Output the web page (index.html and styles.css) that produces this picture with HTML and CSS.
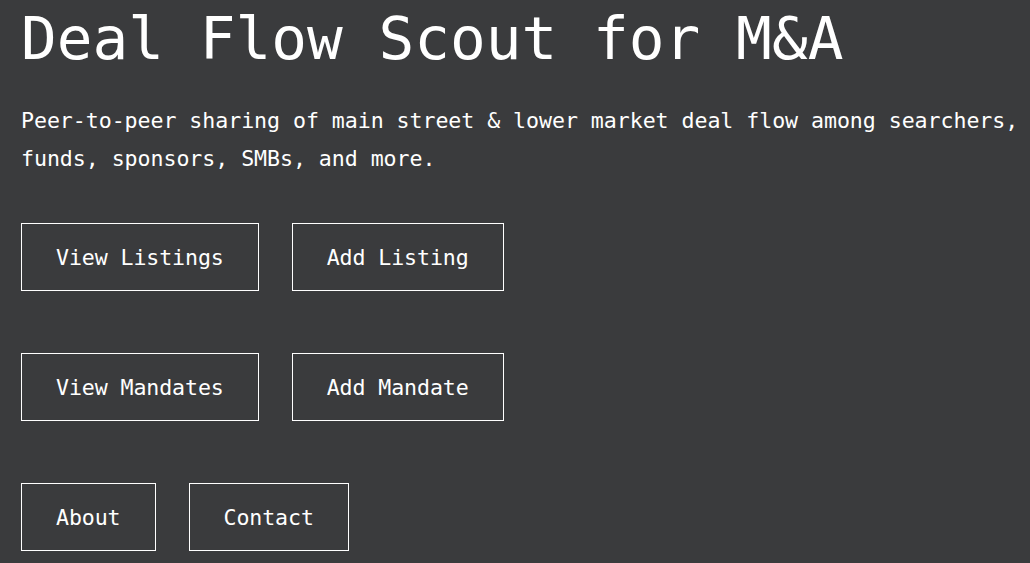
FILE: index.html
```html
<!DOCTYPE html>
<html lang="en">
<head>
  <meta charset="UTF-8">
  <meta name="viewport" content="width=device-width, initial-scale=1.0">
  <title>Deal Flow Scout for M&amp;A</title>
  <link rel="stylesheet" href="styles.css">
</head>
<body>
  <div class="page">
    <h1>Deal Flow Scout for M&amp;A</h1>
    <p class="intro">Peer-to-peer sharing of main street &amp; lower market deal flow among searchers, funds, sponsors, SMBs, and more.</p>

    <div class="actions">
      <a class="btn" href="#">View Listings</a>
      <a class="btn" href="#">Add Listing</a>
    </div>
    <div class="actions">
      <a class="btn" href="#">View Mandates</a>
      <a class="btn" href="#">Add Mandate</a>
    </div>
    <div class="actions">
      <a class="btn" href="#">About</a>
      <a class="btn" href="#">Contact</a>
    </div>
  </div>
</body>
</html>
```

FILE: styles.css
```css
body {
  margin: 0;
  background-color: #3a3b3d;
  color: #ffffff;
  font-family: "DejaVu Sans Mono", "Liberation Mono", monospace;
}
.page {
  padding: 0 0 0 21px;
}
h1 {
  margin: 0;
  padding-top: 7px;
  font-size: 59.4px;
  font-weight: normal;
  line-height: 64px;
}
.intro {
  margin: 31px 0 0;
  font-size: 21.6px;
  line-height: 38px;
  letter-spacing: -0.05px;
}
.actions {
  display: flex;
  gap: 33px;
  margin-top: 62px;
}
.intro + .actions {
  margin-top: 45px;
}
.btn {
  display: block;
  padding: 22px 34px 20px;
  border: 1px solid #ffffff;
  color: #ffffff;
  text-decoration: none;
  font-size: 21.6px;
  line-height: 24px;
  letter-spacing: -0.1px;
}
```
